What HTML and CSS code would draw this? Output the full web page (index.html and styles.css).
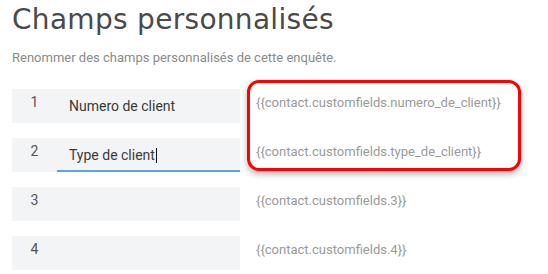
FILE: index.html
```html
<!DOCTYPE html>
<html lang="fr">
<head>
    <meta charset="UTF-8">
    <meta name="viewport" content="width=device-width, initial-scale=1.0">
    <title>Champs personnalisés</title>
    <link rel="stylesheet" href="styles.css">
</head>
<body>
    <h1 class="page-title">Champs personnalisés</h1>
    <p class="page-desc">Renommer des champs personnalisés de cette enquête.</p>

    <div class="fields">
        <div class="field-row">
            <div class="field-box">
                <span class="field-num">1</span>
                <div class="field-input">Numero de client</div>
            </div>
            <span class="field-tag">{{contact.customfields.numero_de_client}}</span>
        </div>
        <div class="field-row">
            <div class="field-box">
                <span class="field-num">2</span>
                <div class="field-input active">Type de client<span class="caret"></span></div>
            </div>
            <span class="field-tag">{{contact.customfields.type_de_client}}</span>
        </div>
        <div class="field-row">
            <div class="field-box">
                <span class="field-num">3</span>
                <div class="field-input"></div>
            </div>
            <span class="field-tag">{{contact.customfields.3}}</span>
        </div>
        <div class="field-row">
            <div class="field-box">
                <span class="field-num">4</span>
                <div class="field-input"></div>
            </div>
            <span class="field-tag">{{contact.customfields.4}}</span>
        </div>

        <!-- annotation around the renamed fields -->
        <div class="highlight"></div>
    </div>
</body>
</html>
```

FILE: styles.css
```css
body {
    margin: 0;
    padding: 0 12px;
    font-family: Roboto, 'Liberation Sans', sans-serif;
    background: #fff;
    color: #333;
}

.page-title {
    margin: 0;
    font-family: 'DejaVu Sans', sans-serif;
    font-weight: normal;
    font-size: 28px;
    line-height: 40px;
    letter-spacing: 0.3px;
    color: #4a4a4a;
}

.page-desc {
    margin: 10px 0 0;
    font-size: 13px;
    line-height: 16px;
    color: #8a8a8a;
}

.fields {
    position: relative;
    margin-top: 23px;
}

.field-row {
    display: grid;
    grid-template-columns: 228px 1fr;
    gap: 16px;
    height: 34px;
    margin-bottom: 15px;
}

.field-box {
    display: flex;
    background: #f3f4f5;
}

.field-num {
    width: 45px;
    padding-top: 5px;
    text-align: center;
    font-size: 14px;
    line-height: 16px;
    color: #555;
}

.field-input {
    flex: 1;
    padding: 9px 0 0 12px;
    font-size: 14px;
    line-height: 16px;
    color: #3a3a3a;
    border-bottom: 2px solid transparent;
}

.field-input.active {
    border-bottom-color: #5ba4e6;
}

.caret {
    display: inline-block;
    width: 1px;
    height: 15px;
    margin-left: 1px;
    vertical-align: -3px;
    background: #111;
}

.field-tag {
    padding-top: 6px;
    font-size: 13px;
    line-height: 16px;
    color: #9a9a9a;
}

.highlight {
    position: absolute;
    left: 235px;
    top: -9px;
    width: 268px;
    height: 85px;
    border: 3.5px solid #ff0000;
    border-radius: 12px;
    box-shadow: 0 3px 6px rgba(0, 0, 0, 0.3);
}
```
